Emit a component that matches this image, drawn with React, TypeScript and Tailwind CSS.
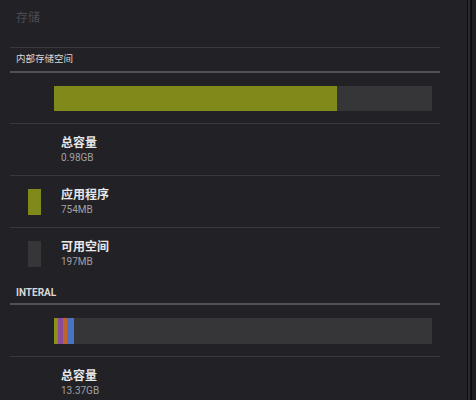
import React from "react";

const font = { fontFamily: '"Roboto", "Noto Sans CJK SC", sans-serif' };

function Item({ label, value, swatch }: { label: string; value: string; swatch?: string }) {
  return (
    <div className="flex h-[51px] shrink-0 items-center">
      <div className="w-[61px] flex justify-start pl-[28px]">
        {swatch ? <div className={`w-[13px] h-[26px] ${swatch}`} /> : null}
      </div>
      <div className="flex flex-col">
        <div className="text-[12px] leading-[16px] font-bold text-[#e8e8e8]">{label}</div>
        <div className="text-[10px] leading-[13px] text-[#a0a0a4]">{value}</div>
      </div>
    </div>
  );
}

export default function App() {
  return (
    <div className="w-[476px] h-[400px] bg-[#222126] flex overflow-hidden" style={font}>
      <div className="w-[467px] flex flex-col">
        <div className="h-[47px] shrink-0 pl-[16px] pt-[9px] text-[12px] text-[#4c4b52]">存储</div>
        <div className="mx-[10px] w-[430px] h-px shrink-0 bg-[#3a393f]" />
        <div className="h-[23px] shrink-0 pl-[16px] flex items-center text-[9.5px] text-[#d8d8d8]">内部存储空间</div>
        <div className="mx-[10px] w-[430px] h-[2px] shrink-0 bg-[#505055]" />
        <div className="h-[50px] shrink-0 flex items-center pl-[54px]">
          <div className="w-[378px] h-[25px] bg-[#363638] flex">
            <div className="w-[283px] h-full bg-[#7f8a1b]" />
          </div>
        </div>
        <div className="mx-[10px] w-[430px] h-px shrink-0 bg-[#39383e]" />
        <Item label="总容量" value="0.98GB" />
        <div className="mx-[10px] w-[430px] h-px shrink-0 bg-[#39383e]" />
        <Item label="应用程序" value="754MB" swatch="bg-[#7f8a1b]" />
        <div className="mx-[10px] w-[430px] h-px shrink-0 bg-[#39383e]" />
        <Item label="可用空间" value="197MB" swatch="bg-[#363638]" />
        <div className="h-[24px] shrink-0 pl-[16px] pt-[2px] flex items-center text-[10px] font-bold text-[#d8d8d8]">INTERAL</div>
        <div className="mx-[10px] w-[430px] h-[2px] shrink-0 bg-[#505055]" />
        <div className="h-[51px] shrink-0 flex items-center pl-[54px]">
          <div className="w-[378px] h-[26px] bg-[#363638] flex">
            <div className="w-[4px] h-full bg-[#8a8f1e]" />
            <div className="w-[5px] h-full bg-[#8b4a9a]" />
            <div className="w-[4px] h-full bg-[#c0652a]" />
            <div className="w-[7px] h-full bg-[#4a74c2]" />
          </div>
        </div>
        <div className="mx-[10px] w-[430px] h-px shrink-0 bg-[#39383e]" />
        <Item label="总容量" value="13.37GB" />
      </div>
      <div className="w-px bg-[#0d0d10]" />
      <div className="w-[2px] bg-[#2b2a30]" />
      <div className="w-[2px] bg-[#0f0f12]" />
      <div className="flex-1 bg-[#1f1e23]" />
    </div>
  );
}
